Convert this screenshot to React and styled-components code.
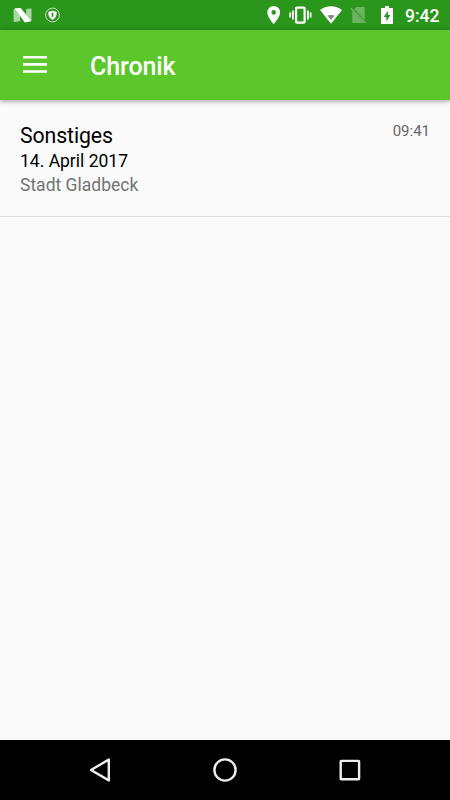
import React from 'react';
import styled, { createGlobalStyle, ThemeProvider } from 'styled-components';

const theme = {
  colors: {
    statusBar: '#2b961c',
    toolbar: '#5cc72b',
    background: '#fafafa',
    divider: '#dedede',
    text: '#000000',
    secondaryText: '#737373',
    light: '#ffffff',
    navigation: '#000000',
  },
};

const GlobalStyle = createGlobalStyle`
  * {
    box-sizing: border-box;
  }

  body {
    margin: 0;
    font-family: Roboto, sans-serif;
  }
`;

const Screen = styled.div`
  display: flex;
  flex-direction: column;
  width: 100%;
  height: 100vh;
  background-color: ${props => props.theme.colors.background};
`;

const StatusBar = styled.div`
  display: flex;
  align-items: center;
  justify-content: space-between;
  flex: none;
  height: 30px;
  padding: 0 10px 0 13px;
  background-color: ${props => props.theme.colors.statusBar};
  color: ${props => props.theme.colors.light};
`;

const StatusGroup = styled.div`
  display: flex;
  align-items: center;
  gap: ${props => props.$gap}px;
`;

const Clock = styled.span`
  width: 35px;
  margin-left: 4px;
  padding-top: 2px;
  font-size: 17.5px;
  font-weight: 500;
  line-height: 28px;
  white-space: nowrap;
`;

const Toolbar = styled.header`
  display: flex;
  align-items: center;
  flex: none;
  height: 70px;
  padding: 0 20px;
  background-color: ${props => props.theme.colors.toolbar};
  color: ${props => props.theme.colors.light};
  box-shadow: 0 1px 5px rgba(0, 0, 0, 0.4);
  z-index: 1;
`;

const MenuButton = styled.button`
  display: flex;
  width: 30px;
  height: 30px;
  margin-right: 40px;
  padding: 0;
  border: 0;
  background: none;
  color: inherit;
`;

const Title = styled.h1`
  margin: 4px 0 0;
  font-size: 25px;
  font-weight: 500;
  line-height: 30px;
  letter-spacing: -0.1px;
`;

const List = styled.main`
  flex: 1;
`;

const Entry = styled.article`
  display: flex;
  justify-content: space-between;
  height: 117px;
  padding: 22px 20px 0;
  border-bottom: 1px solid ${props => props.theme.colors.divider};
`;

const Category = styled.h2`
  margin: 0;
  font-size: 21.25px;
  font-weight: 400;
  line-height: 27px;
  letter-spacing: -0.1px;
  color: ${props => props.theme.colors.text};
`;

const Line = styled.p`
  margin: 0;
  font-size: 17.5px;
  line-height: 24px;
  color: ${props => (props.$secondary ? props.theme.colors.secondaryText : props.theme.colors.text)};
`;

const Time = styled.time`
  font-size: 15px;
  line-height: 18px;
  color: #666666;
`;

const NavigationBar = styled.nav`
  display: flex;
  align-items: center;
  justify-content: center;
  gap: 95px;
  flex: none;
  height: 60px;
  background-color: ${props => props.theme.colors.navigation};
`;

const NavIcon = styled.svg`
  width: 30px;
  height: 30px;
  fill: none;
  stroke: #eeeeee;
  stroke-width: 2.4;
  stroke-linejoin: round;
`;

const Icon = styled.svg`
  display: block;
  flex: none;
  fill: currentColor;
`;

const ChargingIcon = styled(Icon)`
  margin-left: 6px;
`;

const NougatIcon = () => (
  <Icon width='19' height='16' viewBox='0 0 19 16'>
    <path d='M.6 2.2L2.5 1.5 7 8V14.2L.6 15zM13.2 2L18.5 1.4V14.2L13.2 9z' opacity='0.6' />
    <path d='M1.6 1.3L7.8 1 18.4 14.3 11.8 15.4z' />
  </Icon>
);

const ShieldIcon = () => (
  <Icon width='16' height='16' viewBox='0 0 16 16'>
    <circle cx='7.5' cy='8' r='6.9' fill='none' stroke='currentColor' strokeWidth='0.9' opacity='0.8' />
    <path d='M3.4 4.7Q6 4.5 7.5 3.5Q9 4.5 11.6 4.7V7.5Q11.2 10.9 7.5 12.9Q3.8 10.9 3.4 7.5z' />
    <path d='M7.5 5.6a1.1 1.1 0 0 1 .6 2l.5 2.2H6.4l.5-2.2a1.1 1.1 0 0 1 .6-2z' fill={theme.colors.statusBar} />
  </Icon>
);

const LocationIcon = () => (
  <Icon width='14' height='18' viewBox='0 0 14 18'>
    <path
      fillRule='evenodd'
      d='M6.7 0a6.4 6.4 0 0 0-6.4 6.4C.3 11.2 6.7 18 6.7 18s6.4-6.8 6.4-11.6A6.4 6.4 0 0 0 6.7 0zm0 4.1a2.3 2.3 0 1 1 0 4.6a2.3 2.3 0 0 1 0-4.6z'
    />
  </Icon>
);

const VibrateIcon = () => (
  <Icon width='23' height='18' viewBox='0 0 23 18'>
    <rect x='7.1' y='1.6' width='8.5' height='15' rx='0.7' fill='none' stroke='currentColor' strokeWidth='2.2' />
    <path d='M.3 6.4H2v5.2H.3zM3 4.5h1.8v9H3zM18 4.5h1.8v9H18zM20.8 6.4h1.7v5.2h-1.7z' />
  </Icon>
);

const WifiIcon = () => (
  <Icon width='22' height='18' viewBox='0 0 22 18'>
    <path d='M0 4.1Q4.7.2 11 .2T22 4.1L11 17.8z' />
    <path d='M7.4 9.5Q11 8.3 14.6 9.5L11 14z' fill='#858585' />
  </Icon>
);

const NoSimIcon = () => (
  <Icon width='17' height='18' viewBox='0 0 17 18' opacity='0.3'>
    <path d='M4.2 3L6.5 1H13.7Q14.7 1 14.7 2V13.9zM2.3 4.8L14 16.5Q13.8 17 13 17H3.5Q2.3 17 2.3 15.8z' />
    <path d='M.8 2L15.7 17' fill='none' stroke='currentColor' strokeWidth='1.4' />
  </Icon>
);

const BatteryIcon = () => (
  <ChargingIcon width='12' height='18' viewBox='0 0 12 18'>
    <path
      fillRule='evenodd'
      d='M4 0h4v2h3q1 0 1 1v14q0 1-1 1H1q-1 0-1-1V3q0-1 1-1h3zM6.8 4.8L2.7 11H5.3v4.5L9.4 9H6.8z'
    />
  </ChargingIcon>
);

const MenuIcon = () => (
  <Icon width='30' height='30' viewBox='0 0 30 30'>
    <path d='M3 6h24v2.5H3zM3 13.1h24v2.6H3zM3 20.2h24v2.5H3z' />
  </Icon>
);

const entries = [
  {
    category: 'Sonstiges',
    date: '14. April 2017',
    city: 'Stadt Gladbeck',
    time: '09:41',
  },
];

const HistoryEntry = ({
  category, date, city, time,
}) => (
  <Entry>
    <div>
      <Category>{category}</Category>
      <Line>{date}</Line>
      <Line $secondary>{city}</Line>
    </div>
    <Time>{time}</Time>
  </Entry>
);

const App = () => (
  <ThemeProvider theme={theme}>
    <GlobalStyle />
    <Screen>
      <StatusBar>
        <StatusGroup $gap={13}>
          <NougatIcon />
          <ShieldIcon />
        </StatusGroup>
        <StatusGroup $gap={8}>
          <LocationIcon />
          <VibrateIcon />
          <WifiIcon />
          <NoSimIcon />
          <BatteryIcon />
          <Clock>9:42</Clock>
        </StatusGroup>
      </StatusBar>
      <Toolbar>
        <MenuButton aria-label='Menü'>
          <MenuIcon />
        </MenuButton>
        <Title>Chronik</Title>
      </Toolbar>
      <List>
        {entries.map(entry => <HistoryEntry key={entry.time} {...entry} />)}
      </List>
      <NavigationBar>
        <NavIcon viewBox='0 0 30 30'>
          <path d='M6 15L23.8 4.6v20.8z' />
        </NavIcon>
        <NavIcon viewBox='0 0 30 30'>
          <circle cx='15' cy='15' r='10.6' />
        </NavIcon>
        <NavIcon viewBox='0 0 30 30'>
          <rect x='5.7' y='5.9' width='18.4' height='18.4' rx='0.6' />
        </NavIcon>
      </NavigationBar>
    </Screen>
  </ThemeProvider>
);

export default App;
